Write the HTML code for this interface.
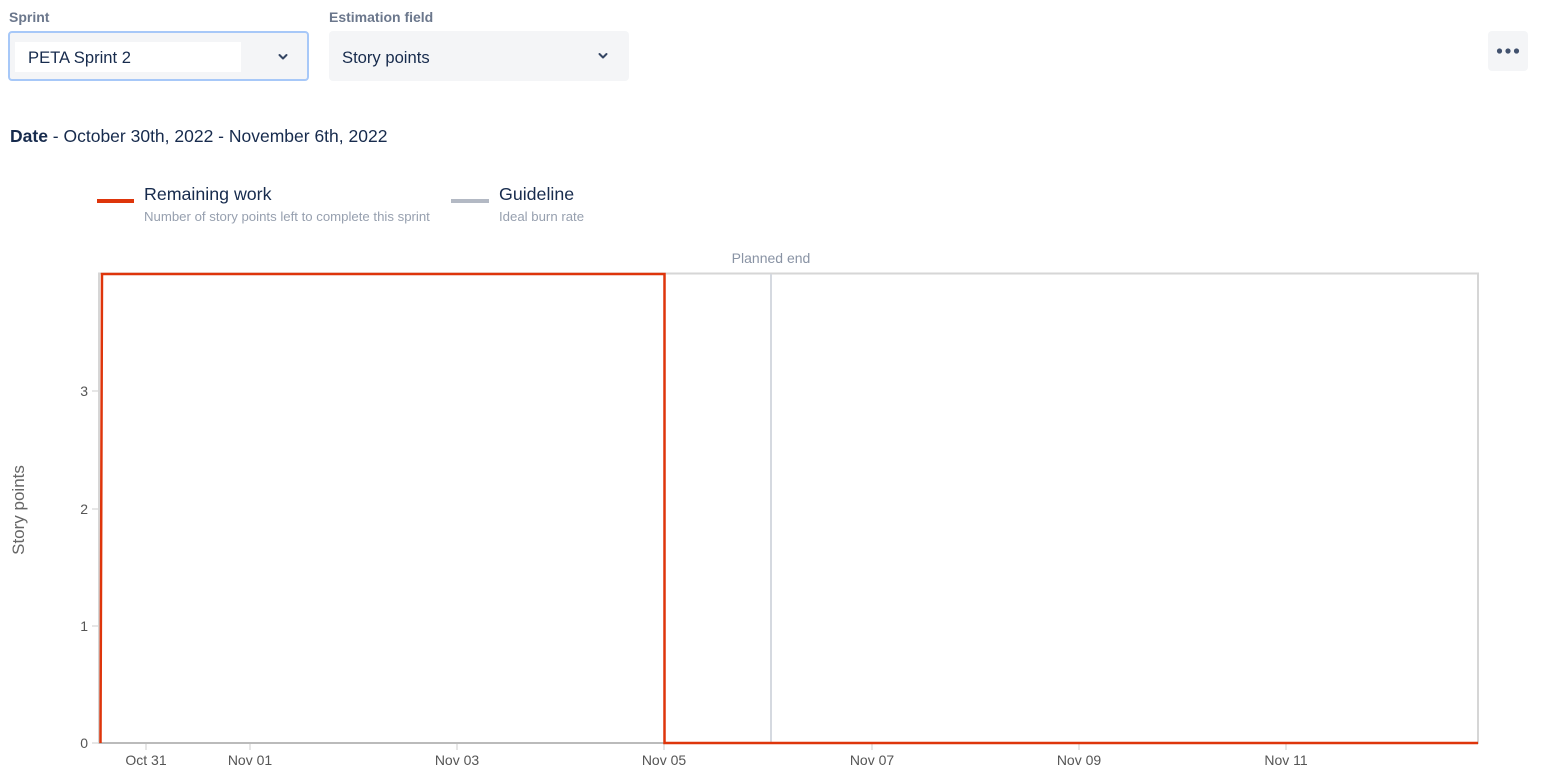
<!DOCTYPE html>
<html><head><meta charset="utf-8"><style>
html,body{margin:0;padding:0;background:#fff;width:1551px;height:778px;overflow:hidden;font-family:"Liberation Sans",sans-serif;}
.abs{position:absolute;}
.lbl{font-size:14px;color:#6b778c;font-weight:bold;}
.sel{border-radius:4px;box-sizing:border-box;}
</style></head><body>
<div class="abs lbl" style="left:9px;top:9px;">Sprint</div>
<div class="abs lbl" style="left:329px;top:9px;">Estimation field</div>
<div class="abs sel" style="left:8px;top:31px;width:301px;height:50px;border:2px solid #a7c8f8;background:#f4f5f7;">
  <div class="abs" style="left:5px;top:9px;width:226px;height:30px;background:#fff;"></div>
  <div class="abs" style="left:18px;top:15px;font-size:16.6px;color:#172b4d;">PETA Sprint 2</div>
  <svg class="abs" style="left:267px;top:18px" width="12" height="12" viewBox="0 0 12 12"><path d="M2.5 4 L6 7.5 L9.5 4" fill="none" stroke="#344563" stroke-width="2" stroke-linecap="round" stroke-linejoin="round"/></svg>
</div>
<div class="abs sel" style="left:329px;top:31px;width:300px;height:50px;background:#f4f5f7;">
  <div class="abs" style="left:13px;top:17px;font-size:16.6px;color:#172b4d;">Story points</div>
  <svg class="abs" style="left:268px;top:19px" width="12" height="12" viewBox="0 0 12 12"><path d="M2.5 4 L6 7.5 L9.5 4" fill="none" stroke="#344563" stroke-width="2" stroke-linecap="round" stroke-linejoin="round"/></svg>
</div>
<div class="abs" style="left:1488px;top:31px;width:40px;height:40px;background:#f4f5f7;border-radius:4px;">
  <svg width="40" height="40"><circle cx="11.5" cy="20" r="2.6" fill="#42526e"/><circle cx="20" cy="20" r="2.6" fill="#42526e"/><circle cx="28.5" cy="20" r="2.6" fill="#42526e"/></svg>
</div>
<div class="abs" style="left:10px;top:126px;font-size:17.5px;color:#172b4d;"><b>Date</b> - October 30th, 2022 - November 6th, 2022</div>

<div class="abs" style="left:97px;top:199px;width:37px;height:4px;background:#de350b;"></div>
<div class="abs" style="left:144px;top:184px;font-size:17.8px;color:#172b4d;">Remaining work</div>
<div class="abs" style="left:144px;top:209px;font-size:13.2px;color:#97a0af;">Number of story points left to complete this sprint</div>
<div class="abs" style="left:451px;top:199px;width:38px;height:4px;background:#b3b9c4;"></div>
<div class="abs" style="left:499px;top:184px;font-size:17.8px;color:#172b4d;">Guideline</div>
<div class="abs" style="left:499px;top:209px;font-size:13.2px;color:#97a0af;">Ideal burn rate</div>

<svg class="abs" style="left:0;top:0" width="1551" height="778" font-family="Liberation Sans, sans-serif">
  <rect x="99" y="273.5" width="1379" height="469.5" fill="none" stroke="#d6d6d6" stroke-width="2"/>
  <line x1="771" y1="274" x2="771" y2="743" stroke="#d5d9e0" stroke-width="2"/>
  <text x="771" y="263" font-size="14" fill="#8993a4" text-anchor="middle">Planned end</text>
  <line x1="99" y1="743" x2="1478" y2="743" stroke="#bbb" stroke-width="2"/>
  <g stroke="#ccc" stroke-width="1">
    <line x1="92" y1="391" x2="98" y2="391"/><line x1="92" y1="509" x2="98" y2="509"/><line x1="92" y1="626" x2="98" y2="626"/><line x1="92" y1="743" x2="98" y2="743"/>
    <line x1="146" y1="744" x2="146" y2="750"/><line x1="250" y1="744" x2="250" y2="750"/><line x1="457" y1="744" x2="457" y2="750"/><line x1="664" y1="744" x2="664" y2="750"/><line x1="872" y1="744" x2="872" y2="750"/><line x1="1079" y1="744" x2="1079" y2="750"/><line x1="1286" y1="744" x2="1286" y2="750"/>
  </g>
  <g font-size="14" fill="#555" text-anchor="end">
    <text x="88" y="396">3</text><text x="88" y="514">2</text><text x="88" y="631">1</text><text x="88" y="748">0</text>
  </g>
  <g font-size="14" fill="#555" text-anchor="middle">
    <text x="146" y="765">Oct 31</text><text x="250" y="765">Nov 01</text><text x="457" y="765">Nov 03</text><text x="664" y="765">Nov 05</text><text x="872" y="765">Nov 07</text><text x="1079" y="765">Nov 09</text><text x="1286" y="765">Nov 11</text>
  </g>
  <text transform="translate(24,510) rotate(-90)" font-size="17" fill="#666" text-anchor="middle">Story points</text>
  <path d="M100.5 743 L102 274 L664.5 274 L664.5 743 L1478 743" fill="none" stroke="#de350b" stroke-width="2.5"/>
</svg>
</body></html>
